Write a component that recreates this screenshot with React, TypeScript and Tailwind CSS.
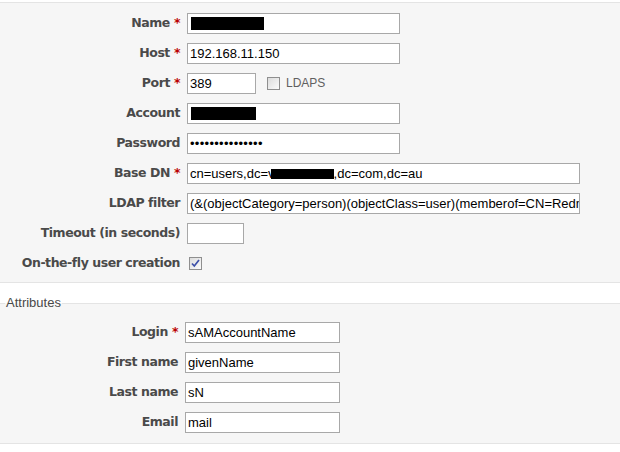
import React from "react";

const labelCls =
  "text-right font-bold text-[12.5px] tracking-[-0.45px] text-[#4a4a4a] whitespace-nowrap leading-[19px] font-['DejaVu_Sans',sans-serif]";
const inputCls =
  "h-[21px] border border-[#a8a8a8] bg-white pl-[2px] text-[13px] leading-[19px] text-black whitespace-nowrap overflow-hidden font-['Liberation_Sans',Arial,sans-serif]";

function Req() {
  return <span className="text-[#bb0000] ml-[4px]">*</span>;
}

function Row({
  label,
  req,
  last,
  lw,
  children,
}: {
  label: string;
  req?: boolean;
  last?: boolean;
  lw: string;
  children: React.ReactNode;
}) {
  return (
    <div className={`flex items-start h-[21px] ${last ? "" : "mb-[9px]"}`}>
      <div className={`${lw} ${labelCls}`}>
        {label}
        {req && <Req />}
      </div>
      {children}
    </div>
  );
}

function Checkbox({ checked }: { checked?: boolean }) {
  return (
    <div className="w-[13px] h-[13px] border border-[#8f8f8f] bg-gradient-to-br from-[#dcdcdc] to-[#fbfbfb] flex items-center justify-center">
      {checked && (
        <svg width="11" height="11" viewBox="0 0 11 11">
          <path d="M2 5.5 L4.3 8 L9 2" stroke="#3c4fa8" strokeWidth="1.7" fill="none" />
        </svg>
      )}
    </div>
  );
}

export default function App() {
  const lw1 = "w-[180px]";
  const lw2 = "w-[178px]";
  return (
    <div className="w-[620px] h-[452px] bg-white overflow-hidden">
      <div className="mt-[2px] border-t border-b border-[#e4e4e4] bg-[#f6f6f6] pt-[10px] pb-[8px]">
        <Row label="Name" req lw={lw1}>
          <div className={`${inputCls} ml-[7px] w-[213px]`}>
            <span className="inline-block w-[73px] h-[13px] bg-black align-middle ml-[1px] -mt-[2px]" />
          </div>
        </Row>
        <Row label="Host" req lw={lw1}>
          <div className={`${inputCls} ml-[7px] w-[213px]`}>192.168.11.150</div>
        </Row>
        <Row label="Port" req lw={lw1}>
          <div className={`${inputCls} ml-[7px] w-[69px]`}>389</div>
          <div className="ml-[11px] mt-[4px]">
            <Checkbox />
          </div>
          <div className="ml-[6px] text-[12px] leading-[21px] text-[#606060] font-['Liberation_Sans',Arial,sans-serif]">
            LDAPS
          </div>
        </Row>
        <Row label="Account" lw={lw1}>
          <div className={`${inputCls} ml-[7px] w-[213px]`}>
            <span className="inline-block w-[65px] h-[13px] bg-black align-middle ml-[1px] -mt-[2px]" />
          </div>
        </Row>
        <Row label="Password" lw={lw1}>
          <div className={`${inputCls} ml-[7px] w-[213px] tracking-[0.3px]`}>•••••••••••••••</div>
        </Row>
        <Row label="Base DN" req lw={lw1}>
          <div className={`${inputCls} ml-[7px] w-[393px]`}>
            cn=users,dc=v
            <span className="inline-block w-[63px] h-[10px] bg-black align-middle -ml-[4px] -mt-[1px]" />
            ,dc=com,dc=au
          </div>
        </Row>
        <Row label="LDAP filter" lw={lw1}>
          <div className={`${inputCls} ml-[7px] w-[393px]`}>
            (&amp;(objectCategory=person)(objectClass=user)(memberof=CN=Redm
          </div>
        </Row>
        <Row label="Timeout (in seconds)" lw={lw1}>
          <div className={`${inputCls} ml-[7px] w-[57px]`}></div>
        </Row>
        <Row label="On-the-fly user creation" lw={lw1} last>
          <div className="ml-[9px] mt-[4px]">
            <Checkbox checked />
          </div>
        </Row>
      </div>

      <fieldset className="mt-[13px] border-t border-b border-[#e4e4e4] bg-[#f6f6f6] pt-[12px] pb-[10px]">
        <legend className="ml-[5px] px-[1px] text-[13px] leading-[14px] text-[#484848] font-['Liberation_Sans',Arial,sans-serif]">
          Attributes
        </legend>
        <Row label="Login" req lw={lw2}>
          <div className={`${inputCls} ml-[7px] w-[155px]`}>sAMAccountName</div>
        </Row>
        <Row label="First name" lw={lw2}>
          <div className={`${inputCls} ml-[7px] w-[155px]`}>givenName</div>
        </Row>
        <Row label="Last name" lw={lw2}>
          <div className={`${inputCls} ml-[7px] w-[155px]`}>sN</div>
        </Row>
        <Row label="Email" lw={lw2} last>
          <div className={`${inputCls} ml-[7px] w-[155px]`}>mail</div>
        </Row>
      </fieldset>
    </div>
  );
}
